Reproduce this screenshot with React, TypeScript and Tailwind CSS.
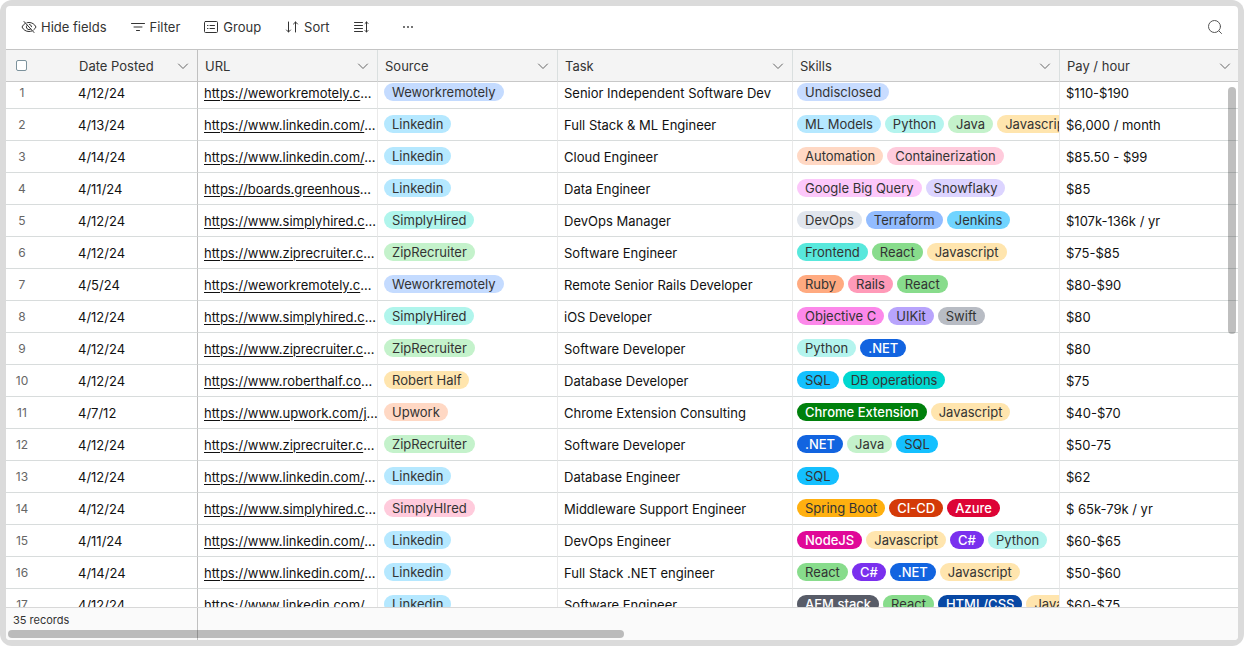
import { ReactNode, useLayoutEffect, useRef } from 'react'

type Tag = { label: string; className: string }

type Job = {
    date: string
    url: string
    source: Tag
    task: string
    skills: Tag[]
    pay: string
}

const tag = (label: string, className: string): Tag => ({ label, className })

// sources
const weworkremotely = tag('Weworkremotely', 'bg-[#c4dbff]')
const linkedin = tag('Linkedin', 'bg-[#b5e8ff]')
const simplyHired = tag('SimplyHired', 'bg-[#b0f5ec]')
const zipRecruiter = tag('ZipRecruiter', 'bg-[#c4f2cb]')

// skills
const python = tag('Python', 'bg-[#b4f4ee]')
const java = tag('Java', 'bg-[#c4f2cb]')
const javascript = tag('Javascript', 'bg-[#ffe5ae]')
const react = tag('React', 'bg-[#88dc8c]')
const dotnet = tag('.NET', 'bg-[#1264e0] font-medium text-white')
const csharp = tag('C#', 'bg-[#7a30ee] font-medium text-white')
const sql = tag('SQL', 'bg-[#14c0ff]')

const jobs: Job[] = [
    { date: '4/12/24', url: 'https://weworkremotely.c', source: weworkremotely, task: 'Senior Independent Software Dev', skills: [tag('Undisclosed', 'bg-[#c8dcff]')], pay: '$110-$190' },
    { date: '4/13/24', url: 'https://www.linkedin.com/', source: linkedin, task: 'Full Stack & ML Engineer', skills: [tag('ML Models', 'bg-[#b5e8ff]'), python, java, javascript], pay: '$6,000 / month' },
    { date: '4/14/24', url: 'https://www.linkedin.com/', source: linkedin, task: 'Cloud Engineer', skills: [tag('Automation', 'bg-[#ffd8c4]'), tag('Containerization', 'bg-[#ffcbdc]')], pay: '$85.50 - $99' },
    { date: '4/11/24', url: 'https://boards.greenhous', source: linkedin, task: 'Data Engineer', skills: [tag('Google Big Query', 'bg-[#fcc8fa]'), tag('Snowflaky', 'bg-[#dcd4ff]')], pay: '$85' },
    { date: '4/12/24', url: 'https://www.simplyhired.c', source: simplyHired, task: 'DevOps Manager', skills: [tag('DevOps', 'bg-[#e0e5ed]'), tag('Terraform', 'bg-[#92bcff]'), tag('Jenkins', 'bg-[#70d4ff]')], pay: '$107k-136k / yr' },
    { date: '4/12/24', url: 'https://www.ziprecruiter.c', source: zipRecruiter, task: 'Software Engineer', skills: [tag('Frontend', 'bg-[#58e8dc]'), react, javascript], pay: '$75-$85' },
    { date: '4/5/24', url: 'https://weworkremotely.c', source: weworkremotely, task: 'Remote Senior Rails Developer', skills: [tag('Ruby', 'bg-[#ffaa80]'), tag('Rails', 'bg-[#ff9ab8]'), react], pay: '$80-$90' },
    { date: '4/12/24', url: 'https://www.simplyhired.c', source: simplyHired, task: 'iOS Developer', skills: [tag('Objective C', 'bg-[#fc88ea]'), tag('UIKit', 'bg-[#b8a4fc]'), tag('Swift', 'bg-[#b8bcc4]')], pay: '$80' },
    { date: '4/12/24', url: 'https://www.ziprecruiter.c', source: zipRecruiter, task: 'Software Developer', skills: [python, dotnet], pay: '$80' },
    { date: '4/12/24', url: 'https://www.roberthalf.co', source: tag('Robert Half', 'bg-[#ffe5ae]'), task: 'Database Developer', skills: [sql, tag('DB operations', 'bg-[#00d8d0]')], pay: '$75' },
    { date: '4/7/12', url: 'https://www.upwork.com/j', source: tag('Upwork', 'bg-[#ffd8c4]'), task: 'Chrome Extension Consulting', skills: [tag('Chrome Extension', 'bg-[#00800c] font-medium text-white'), javascript], pay: '$40-$70' },
    { date: '4/12/24', url: 'https://www.ziprecruiter.c', source: zipRecruiter, task: 'Software Developer', skills: [dotnet, java, sql], pay: '$50-75' },
    { date: '4/12/24', url: 'https://www.linkedin.com/', source: linkedin, task: 'Database Engineer', skills: [sql], pay: '$62' },
    { date: '4/12/24', url: 'https://www.simplyhired.c', source: tag('SimplyHIred', 'bg-[#ffcbdc]'), task: 'Middleware Support Engineer', skills: [tag('Spring Boot', 'bg-[#ffb010]'), tag('CI-CD', 'bg-[#d43a08] font-medium text-white'), tag('Azure', 'bg-[#dd0436] font-medium text-white')], pay: '$ 65k-79k / yr' },
    { date: '4/11/24', url: 'https://www.linkedin.com/', source: linkedin, task: 'DevOps Engineer', skills: [tag('NodeJS', 'bg-[#e00898] font-medium text-white'), javascript, csharp, python], pay: '$60-$65' },
    { date: '4/14/24', url: 'https://www.linkedin.com/', source: linkedin, task: 'Full Stack .NET engineer', skills: [react, csharp, dotnet, javascript], pay: '$50-$60' },
    { date: '4/12/24', url: 'https://www.linkedin.com/', source: linkedin, task: 'Software Engineer', skills: [tag('AEM stack', 'bg-[#585c68] font-medium text-white'), react, tag('HTML/CSS', 'bg-[#0848a4] font-medium text-white'), javascript], pay: '$60-$75' },
]

function Icon({ children }: { children: ReactNode }) {
    return (
        <svg viewBox="0 0 16 16" className="size-4 shrink-0" fill="none" stroke="currentColor" strokeWidth="1" strokeLinecap="round" strokeLinejoin="round" aria-hidden="true">
            {children}
        </svg>
    )
}

function ToolbarButton({ icon, text }: { icon: ReactNode; text: string }) {
    return (
        <button type="button" className="flex items-center gap-1 whitespace-nowrap">
            <Icon>{icon}</Icon>
            {text}
        </button>
    )
}

function Pill({ item }: { item: Tag }) {
    return (
        <span className={`h-[18px] shrink-0 rounded-full px-2 leading-[18px] whitespace-nowrap ${item.className}`}>
            {item.label}
        </span>
    )
}

function HeaderCell({ title, frozen }: { title: string; frozen?: boolean }) {
    return (
        <th scope="col" className={`h-8 border-r border-b border-b-[#c8c8c8] bg-[#f4f4f4] p-0 font-normal ${frozen ? 'border-r-[#c0c0c0]' : 'border-r-[#dadfdf]'}`}>
            <div className="flex items-center justify-between pr-[6px] pl-[7px]">
                {title}
                <button type="button" aria-label={`${title} options`} className="text-[#666]">
                    <Icon><path d="M3.5 6 8 10.500l4.500-4.500" /></Icon>
                </button>
            </div>
        </th>
    )
}

const cell = 'h-8 overflow-hidden border-b border-b-[#d8dcdc] px-[6px] py-0 whitespace-nowrap'

export default function App() {
    const scroller = useRef<HTMLDivElement>(null)

    useLayoutEffect(() => {
        if (scroller.current) scroller.current.scrollTop = 5
    }, [])

    return (
        <div className="h-screen bg-white font-[Inter,sans-serif] text-[13px] leading-[18px] text-[#333]">
            <div className="h-full rounded-xl bg-[#dbdbdb] p-[6px]">
                <div className="relative flex h-full flex-col overflow-hidden rounded bg-white">

                    {/* TOOLBAR */}
                    <div className="flex h-11 shrink-0 items-center border-b border-[#c4c4c4] pr-[15px] pb-px pl-[15px]">
                        <div className="flex items-center gap-[23px]">
                            <ToolbarButton
                                text="Hide fields"
                                icon={<>
                                    <path d="M6 3.700A8 8 0 0 1 8 3.500c3 0 5.600 1.600 7 4.500a8.500 8.500 0 0 1-2.300 2.900M10.800 12a8 8 0 0 1-2.800.500C5 12.500 2.400 10.900 1 8a8 8 0 0 1 3.200-3.600" />
                                    <path d="M9.800 9.900A2.600 2.600 0 0 1 6.200 6.100M8.500 5.400A2.600 2.600 0 0 1 10.600 7.700M3 2.500l10 11" />
                                </>}
                            />
                            <ToolbarButton text="Filter" icon={<path d="M1.500 4.500h13M4 8h8M6.500 11.500h3" />} />
                            <ToolbarButton
                                text="Group"
                                icon={<>
                                    <rect x="1.500" y="2.500" width="13" height="11" rx="1" />
                                    <path d="M4.500 6.500h.5M7 6.500h4.500M4.500 9.500h.5M7 9.500h4.500" />
                                </>}
                            />
                            <ToolbarButton text="Sort" icon={<path d="M4.500 3v10M2.500 11l2 2 2-2M11.500 13V3M9.500 5l2-2 2 2" />} />
                            <button type="button" aria-label="Row height">
                                <Icon><path d="M1.500 3.500h8M1.500 6.500h8M1.500 9.500h8M1.500 12.500h8M13.500 3v10M12 4.500 13.500 3 15 4.500M12 11.500l1.500 1.500 1.500-1.500" /></Icon>
                            </button>
                            <button type="button" aria-label="More options" className="ml-2">
                                <Icon><path strokeWidth="1.800" d="M4 8h.010M8 8h.010M12 8h.010" /></Icon>
                            </button>
                        </div>
                        <button type="button" aria-label="Search" className="ml-auto text-[#555]">
                            <Icon><circle cx="7.500" cy="7.500" r="6" /><path d="M12 12l2.500 2.500" /></Icon>
                        </button>
                    </div>

                    {/* TABLE */}
                    <div ref={scroller} className="min-h-0 flex-1 overflow-auto [scrollbar-width:none]">
                        <table className="w-full min-w-[1234px] table-fixed border-separate border-spacing-0 text-left">
                            <colgroup>
                                <col className="w-[66px]" />
                                <col className="w-[126px]" />
                                <col className="w-[180px]" />
                                <col className="w-[180px]" />
                                <col className="w-[235px]" />
                                <col className="w-[267px]" />
                                <col />
                            </colgroup>
                            <thead className="sticky top-0 z-10">
                                <tr>
                                    <th className="border-b border-[#c8c8c8] bg-[#f4f4f4] p-0 pl-[10px]">
                                        <input type="checkbox" aria-label="Select all rows" className="block size-[11px] appearance-none rounded-xs border border-[#7c929c] bg-white" />
                                    </th>
                                    <HeaderCell title="Date Posted" frozen />
                                    <HeaderCell title="URL" />
                                    <HeaderCell title="Source" />
                                    <HeaderCell title="Task" />
                                    <HeaderCell title="Skills" />
                                    <HeaderCell title="Pay / hour" />
                                </tr>
                            </thead>
                            <tbody className="text-[#111]">
                                {jobs.map((job, i) => (
                                    <tr key={i}>
                                        <td className="border-b border-b-[#d8dcdc] p-0 text-xs text-[#666]">
                                            <div className="w-8 text-center">{i + 1}</div>
                                        </td>
                                        <td className={`${cell} border-r border-r-[#c0c0c0]`}>{job.date}</td>
                                        <td className={`${cell} border-r border-r-[#eaeaea]`}>
                                            <a href={job.url} className="underline underline-offset-2">{job.url}</a>…
                                        </td>
                                        <td className={`${cell} border-r border-r-[#eaeaea]`}>
                                            <div className="flex pb-[2px] text-[#333]"><Pill item={job.source} /></div>
                                        </td>
                                        <td className={`${cell} border-r border-r-[#eaeaea]`}>{job.task}</td>
                                        <td className={`${cell} border-r border-r-[#eaeaea] pr-0 pl-1`}>
                                            <div className="flex gap-1 overflow-hidden pb-[2px] text-[#333]">
                                                {job.skills.map(skill => <Pill key={skill.label} item={skill} />)}
                                            </div>
                                        </td>
                                        <td className={cell}>{job.pay}</td>
                                    </tr>
                                ))}
                            </tbody>
                        </table>
                    </div>

                    {/* FOOTER */}
                    <div className="flex h-[33px] shrink-0 border-t border-[#d8d8d8] bg-[#fafafa] text-[11px]">
                        <div className="w-48 border-r border-[#c0c0c0] pt-[3px] pl-[7px]">35 records</div>
                    </div>

                    {/* SCROLLBARS */}
                    <div className="absolute top-[81px] right-[2px] h-[247px] w-2 rounded-full bg-black/25" />
                    <div className="absolute bottom-[2px] left-[2px] h-2 w-1/2 rounded-full bg-black/25" />
                </div>
            </div>
        </div>
    )
}
